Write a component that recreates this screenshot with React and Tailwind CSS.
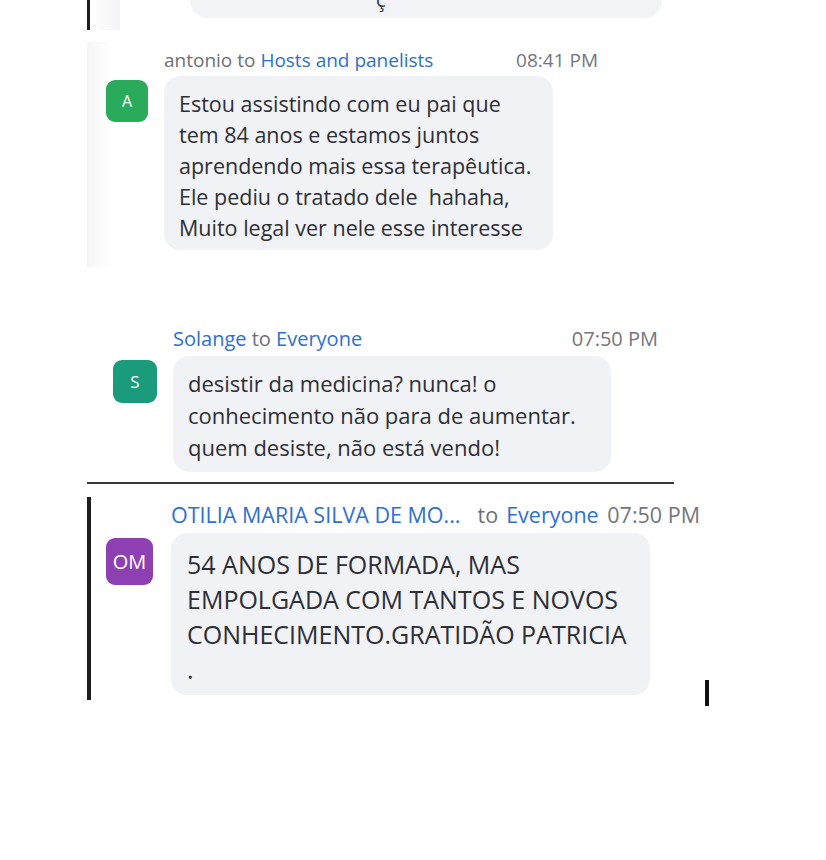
import React from "react";

const font = { fontFamily: '"Open Sans", "Noto Sans", sans-serif' };

export default function App() {
  return (
    <div className="w-[826px] h-[860px] bg-white overflow-hidden text-[#2e2e35]" style={font}>
      {/* Piece 1: bottom of a previous message */}
      <div className="ml-[87px] h-[30px] flex">
        <div className="w-[3px] h-full bg-[#1e1e1e]" />
        <div className="w-[30px] h-full bg-gradient-to-r from-white to-[#f4f4f6]" />
        <div className="ml-[70px] w-[472px] h-[18px] rounded-b-[18px] bg-[#f2f3f6] overflow-hidden">
          <div className="pl-[186px] text-[20px] leading-[20px] -mt-[10px] text-[#3a3a40]">ç</div>
        </div>
      </div>

      {/* Piece 2: antonio */}
      <div className="mt-[12px] ml-[87px] w-[480px] h-[225px] pl-[19px] pt-[6px] bg-gradient-to-r from-[#f5f5f6] to-white to-5%">
        <div className="grid grid-cols-[42px_434px] gap-x-[16px]">
          <div />
          <div className="h-[24px] flex items-center justify-between text-[19px] leading-[24px] whitespace-nowrap">
            <span>
              <span className="text-[#6d6f78]">antonio</span>
              <span className="text-[#6d6f78]"> to </span>
              <span className="text-[#2f6fd0]">Hosts and panelists</span>
            </span>
            <span className="text-[#74757f]">08:41 PM</span>
          </div>
          <div className="mt-[8px] w-[42px] h-[42px] rounded-[9px] bg-[#2aab5c] flex items-center justify-center text-white text-[16px]">
            A
          </div>
          <div className="mt-[4px] w-[389px] h-[174px] rounded-[16px] bg-[#f1f2f6] pl-[15px] pt-[12px] text-[21.5px] leading-[31px] whitespace-pre">
            {"Estou assistindo com eu pai que\ntem 84 anos e estamos juntos\naprendendo mais essa terapêutica.\nEle pediu o tratado dele  hahaha,\nMuito legal ver nele esse interesse"}
          </div>
        </div>
      </div>

      {/* Piece 3: Solange */}
      <div className="mt-[59px] ml-[87px] pl-[26px]">
        <div className="grid grid-cols-[44px_485px] gap-x-[16px]">
          <div />
          <div className="h-[26px] mb-[4px] flex items-center justify-between text-[20px] leading-[26px] whitespace-nowrap">
            <span>
              <span className="text-[#2f6fd0]">Solange</span>
              <span className="text-[#6d6f78]"> to </span>
              <span className="text-[#2f6fd0]">Everyone</span>
            </span>
            <span className="text-[#74757f]">07:50 PM</span>
          </div>
          <div className="mt-[4px] w-[44px] h-[43px] rounded-[9px] bg-[#1a9b7b] flex items-center justify-center text-white text-[17px]">
            S
          </div>
          <div className="w-[438px] h-[116px] rounded-[16px] bg-[#f1f2f6] pl-[15px] pt-[11px] text-[22px] leading-[32px] whitespace-pre">
            {"desistir da medicina? nunca! o\nconhecimento não para de aumentar.\nquem desiste, não está vendo!"}
          </div>
        </div>
      </div>

      {/* Divider */}
      <div className="mt-[10px] ml-[87px] w-[587px] h-[2px] bg-[#3a3a3a]" />

      {/* Piece 4: OTILIA */}
      <div className="mt-[13px] ml-[87px] flex">
        <div className="w-[4px] h-[203px] bg-[#1e1e1e]" />
        <div className="pl-[15px] pt-[3px]">
          <div className="grid grid-cols-[47px_529px] gap-x-[18px]">
            <div />
            <div className="h-[30px] mb-[3px] flex items-center text-[21.5px] leading-[30px] whitespace-nowrap">
              <span className="text-[#2f6fd0]">OTILIA MARIA SILVA DE MO...</span>
              <span className="ml-[17px] text-[#6d6f78]">to</span>
              <span className="ml-[8px] text-[#2f6fd0]">Everyone</span>
              <span className="ml-auto text-[#74757f]">07:50 PM</span>
            </div>
            <div className="mt-[5px] w-[47px] h-[47px] rounded-[9px] bg-[#8e3fb1] flex items-center justify-center text-white text-[20px]">
              OM
            </div>
            <div className="w-[479px] h-[162px] rounded-[16px] bg-[#f1f2f6] pl-[16px] pt-[14px] text-[25px] leading-[35px] whitespace-pre">
              {"54 ANOS DE FORMADA, MAS\nEMPOLGADA COM TANTOS E NOVOS\nCONHECIMENTO.GRATIDÃO PATRICIA\n."}
            </div>
          </div>
        </div>
        <div className="self-end ml-[5px] -mb-[6px] w-[4px] h-[26px] bg-[#111]" />
      </div>
    </div>
  );
}
